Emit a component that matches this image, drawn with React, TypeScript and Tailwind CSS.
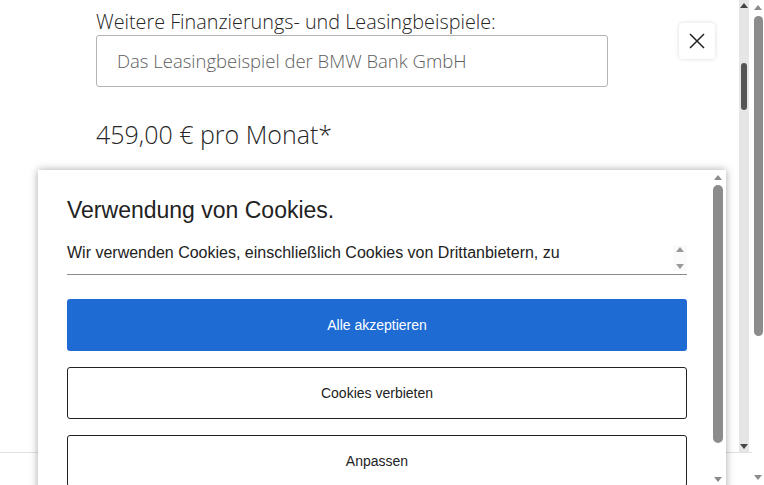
import React from 'react'

const pageFont = { fontFamily: '"Open Sans", "Noto Sans", sans-serif' }
const arial = { fontFamily: '"Liberation Sans", Arial, sans-serif' }

function ArrowUp({ className = '' }: { className?: string }) {
    return (
        <svg width="8" height="5" viewBox="0 0 8 5" className={className}>
            <path d="M0 5 L4 0 L8 5 Z" fill="currentColor" />
        </svg>
    )
}

function ArrowDown({ className = '' }: { className?: string }) {
    return (
        <svg width="8" height="5" viewBox="0 0 8 5" className={className}>
            <path d="M0 0 L8 0 L4 5 Z" fill="currentColor" />
        </svg>
    )
}

export default function App() {
    return (
        <div className="w-[764px] h-[485px] overflow-hidden bg-white flex relative">
            {/* page frame with its own scroller */}
            <div className="w-[752px] h-full flex flex-col">
                <div className="h-[453px] flex border-b border-[#e0e0e0]">
                    <div className="flex-1 relative" style={pageFont}>
                        <div className="pl-[96px] pt-[9px] w-[608px]">
                            <div className="text-[19.8px] leading-[26px] text-[#262626] font-light whitespace-nowrap">
                                Weitere Finanzierungs- und Leasingbeispiele:
                            </div>
                            <div className="h-[52px] w-[512px] border border-[#b3b3b3] rounded-[3px] flex items-center pl-[20px] text-[18.5px] text-[#5e5e5e] font-light">
                                Das Leasingbeispiel der BMW Bank GmbH
                            </div>
                            <div className="mt-[31px] text-[25px] leading-[33px] text-[#262626] font-light">
                                459,00 € pro Monat*
                            </div>
                        </div>
                        <button className="absolute left-[679px] top-[23px] w-[36px] h-[36px] bg-white rounded-[4px] shadow-[0_0_4px_rgba(0,0,0,0.15)] flex items-center justify-center text-[#222]">
                            <svg width="18" height="18" viewBox="0 0 18 18">
                                <path d="M2 2 L16 16 M16 2 L2 16" stroke="currentColor" strokeWidth="1.5" />
                            </svg>
                        </button>
                    </div>
                    <div className="w-[10px] mr-[3px] bg-[#e6e6e6] flex flex-col items-center py-[3px]">
                        <ArrowUp className="text-[#444]" />
                        <div className="mt-[55px] w-[6px] h-[47px] rounded-full bg-[#555]" />
                        <div className="flex-1" />
                        <ArrowDown className="text-[#444]" />
                    </div>
                </div>
                <div className="flex-1 bg-white" />
            </div>

            {/* outer window scrollbar */}
            <div className="w-[12px] h-full flex flex-col items-center py-[5px]">
                <ArrowUp className="text-[#8c8c8c]" />
                <div className="mt-[6px] w-[9px] h-[320px] rounded-full bg-[#8c8c8c]" />
                <div className="flex-1" />
                <ArrowDown className="text-[#8c8c8c]" />
            </div>

            {/* cookie dialog */}
            <div className="absolute left-[38px] top-[170px] w-[688px] h-[330px] bg-white shadow-[0_0_8px_rgba(0,0,0,0.35)] flex" style={arial}>
                <div className="flex-1 pl-[29px] pr-[25px] pt-[26px]">
                    <h2 className="text-[23px] leading-[28px] text-[#222]">Verwendung von Cookies.</h2>
                    <div className="mt-[14px] h-[37px] border-b border-[#8a8a8a] flex items-start">
                        <p className="flex-1 pt-[5px] text-[16px] leading-[20px] text-[#222]">
                            Wir verwenden Cookies, einschließlich Cookies von Drittanbietern, zu
                        </p>
                        <div className="w-[14px] mt-[7px] h-[26px] bg-[#fafafa] flex flex-col items-center justify-between py-[2px]">
                            <ArrowUp className="text-[#999]" />
                            <ArrowDown className="text-[#999]" />
                        </div>
                    </div>
                    <div className="mt-[24px] flex flex-col gap-[16px] text-[14px]">
                        <button className="h-[52px] w-full rounded-[3px] bg-[#1e6bd4] text-white">Alle akzeptieren</button>
                        <button className="h-[52px] w-full rounded-[3px] border border-[#222] text-[#222]">Cookies verbieten</button>
                        <button className="h-[52px] w-full rounded-[3px] border border-[#222] text-[#222]">Anpassen</button>
                    </div>
                </div>
                <div className="w-[12px] mr-[2px] flex flex-col items-center pt-[5px] pb-[18px]">
                    <ArrowUp className="text-[#8c8c8c]" />
                    <div className="mt-[5px] w-[10px] h-[258px] rounded-full bg-[#8c8c8c]" />
                    <div className="flex-1" />
                    <ArrowDown className="text-[#8c8c8c]" />
                </div>
            </div>
        </div>
    )
}
